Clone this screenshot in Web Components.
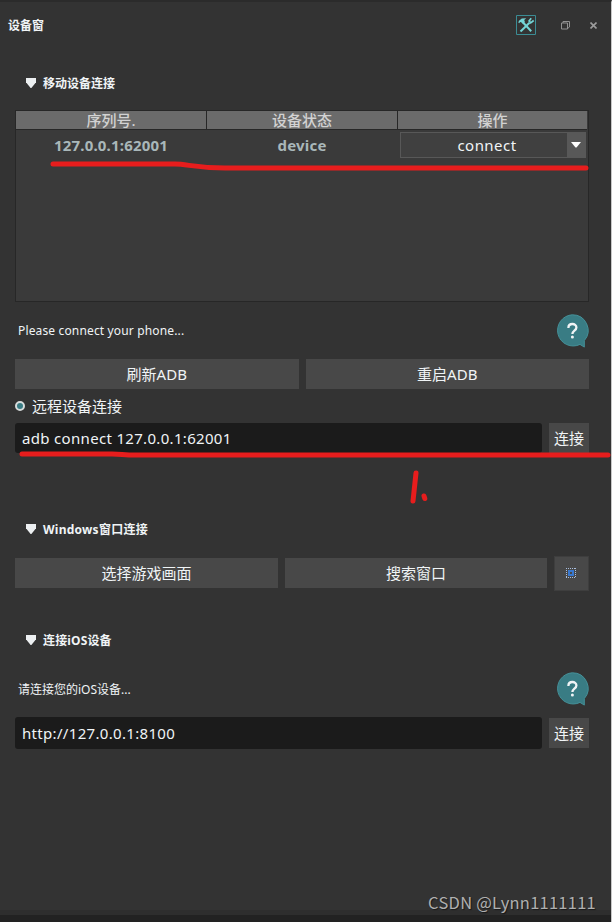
<!DOCTYPE html>
<html lang="zh-CN">
<head>
<meta charset="utf-8">
<title>设备窗</title>
<style>
  body {
    margin: 0;
    background: #333;
  }
</style>
</head>
<body>
<device-window></device-window>

<script>
class PanelButton extends HTMLElement {
  constructor() {
    super();
    this.attachShadow({ mode: "open" });
  }

  static get styles() {
    return /* css */`
      :host {
        display: flex;
        align-items: center;
        justify-content: center;
        box-sizing: border-box;
        height: 30px;
        padding: 0 0 2px 0;
        background: #484848;
        color: #f0f4f6;
        font-size: 15px;
        white-space: nowrap;
      }

      :host([tool]) {
        width: 35px;
        height: 35px;
        padding: 0 1px 1px 0;
        border: 1px solid #3e3e3e;
      }
    `;
  }

  connectedCallback() {
    this.shadowRoot.innerHTML = /* html */`
    <style>${PanelButton.styles}</style>
    <slot></slot>`;
  }
}

class SectionTitle extends HTMLElement {
  constructor() {
    super();
    this.attachShadow({ mode: "open" });
  }

  static get styles() {
    return /* css */`
      :host {
        display: flex;
        align-items: center;
        gap: 7px;
        height: 20px;
        padding-left: 26px;
        color: #f0f4f6;
        font-size: 12px;
        font-weight: 700;
      }

      svg {
        display: block;
      }
    `;
  }

  connectedCallback() {
    this.shadowRoot.innerHTML = /* html */`
    <style>${SectionTitle.styles}</style>
    <svg width="10" height="10"><path d="M0 0h10v4.2L5.4 10h-.8L0 4.2z" fill="#eceff1"/></svg>
    <span><slot></slot></span>`;
  }
}

class HelpBubble extends HTMLElement {
  constructor() {
    super();
    this.attachShadow({ mode: "open" });
  }

  static get styles() {
    return /* css */`
      :host {
        display: block;
        width: 33px;
        height: 34px;
      }

      svg {
        display: block;
      }
    `;
  }

  connectedCallback() {
    this.shadowRoot.innerHTML = /* html */`
    <style>${HelpBubble.styles}</style>
    <svg width="33" height="34" viewBox="0 0 33 34">
      <path d="M16.3.8a15.6 15.6 0 1 0 7.7 29.6l4.3 2.7v-6.5A15.6 15.6 0 0 0 16.3.8z" fill="#397c84" stroke="#459098"/>
      <path d="M12.4 13.9c0-5.2 8-5 8-.5 0 3.2-4 3.3-4 6.6" fill="none" stroke="#f0f4f6" stroke-width="2.3"/>
      <circle cx="16.4" cy="23" r="1.5" fill="#f0f4f6"/>
    </svg>`;
  }
}

class TextField extends HTMLElement {
  constructor() {
    super();
    this.attachShadow({ mode: "open" });
  }

  static get styles() {
    return /* css */`
      :host {
        display: flex;
        align-items: center;
        box-sizing: border-box;
        width: 527px;
        height: 30px;
        padding-left: 7px;
        border-radius: 3px;
        background: #1b1b1b;
        color: #f0f4f6;
        font-size: 15px;
        letter-spacing: 0.32px;
      }
    `;
  }

  connectedCallback() {
    this.shadowRoot.innerHTML = /* html */`
    <style>${TextField.styles}</style>
    <span><slot></slot></span>`;
  }
}

class DeviceTable extends HTMLElement {
  constructor() {
    super();
    this.attachShadow({ mode: "open" });
  }

  static get styles() {
    return /* css */`
      :host {
        display: block;
        box-sizing: border-box;
        width: 574px;
        height: 192px;
        border: 1px solid #272727;
        background: #3a3a3a;
        font-size: 15px;
        font-weight: 700;
      }

      .row {
        display: grid;
        grid-template-columns: 190px 190px 189px;
        column-gap: 1px;
        text-align: center;
      }

      .head {
        width: 571px;
        background: #272727;
        border-bottom: 1px solid #272727;
        color: #d2d2d2;
        font-weight: 500;
        line-height: 18px;
      }

      .head span {
        height: 18px;
        background: #6b6b6b;
      }

      .body {
        color: #a9b7b9;
        letter-spacing: 0.2px;
        line-height: 31px;
      }

      .select {
        display: flex;
        box-sizing: border-box;
        width: 186px;
        height: 26px;
        margin: 2px 0 0 2px;
        border: 1px solid #585858;
        background: #404040;
        color: #f0f4f6;
        font-weight: 400;
        letter-spacing: 0.45px;
        line-height: 25px;
      }

      .select span {
        flex: 1;
        padding-left: 6px;
      }

      .arrow {
        display: flex;
        justify-content: center;
        width: 18px;
        padding: 9px 1px 0 0;
        box-sizing: border-box;
        background: #585858;
      }
    `;
  }

  connectedCallback() {
    this.shadowRoot.innerHTML = /* html */`
    <style>${DeviceTable.styles}</style>
    <div class="row head"><span>序列号.</span><span>设备状态</span><span>操作</span></div>
    <div class="row body">
      <span>127.0.0.1:62001</span>
      <span>device</span>
      <div class="select">
        <span>connect</span>
        <div class="arrow"><svg width="10" height="6"><path d="M0 0h10L5.5 5.5h-1z" fill="#fff"/></svg></div>
      </div>
    </div>`;
  }
}

class DeviceWindow extends HTMLElement {
  constructor() {
    super();
    this.attachShadow({ mode: "open" });
  }

  static get styles() {
    return /* css */`
      :host {
        display: flex;
        flex-direction: column;
        position: relative;
        box-sizing: border-box;
        width: 612px;
        height: 922px;
        overflow: hidden;
        padding-left: 15px;
        border-top: 2px solid #2b2b2b;
        border-right: 1px solid #c8c8c8;
        background: #333;
        color: #f0f4f6;
        font-family: "Noto Sans", "Noto Sans CJK SC", sans-serif;
      }

      .titlebar {
        display: flex;
        align-items: center;
        height: 46px;
        margin-left: -7px;
        font-size: 12px;
        font-weight: 700;
      }

      .titlebar span {
        flex: 1;
      }

      .titlebar svg {
        display: block;
      }

      .line {
        display: flex;
        width: 574px;
        gap: 7px;
      }

      .hint {
        align-items: center;
        justify-content: space-between;
        box-sizing: border-box;
        height: 34px;
        padding-left: 3px;
        font-size: 12px;
      }

      .hint span {
        padding-bottom: 1px;
      }

      .radio {
        align-items: center;
        height: 34px;
        font-size: 15px;
      }

      .radio span {
        padding-bottom: 1px;
      }

      .dot {
        box-sizing: border-box;
        width: 10px;
        height: 10px;
        border: 2px solid #d8dcdc;
        border-radius: 50%;
        background: #397c84;
      }

      .half {
        flex: 1;
      }

      .go {
        width: 40px;
      }

      .foot {
        height: 12px;
        margin: auto 0 0 -15px;
        background: linear-gradient(#2e2e2e 5px, #222 5px);
      }

      .watermark {
        position: absolute;
        right: 15px;
        bottom: 9px;
        color: #b0b0b0;
        font: 400 16.5px/22px "Noto Sans CJK SC", sans-serif;
        letter-spacing: 0.25px;
        white-space: nowrap;
        text-shadow: 1px 1px 1px #0008;
      }

      .pen {
        position: absolute;
        left: 0;
        top: -2px;
        fill: none;
        stroke: #e71d1d;
        stroke-width: 5;
        stroke-linecap: round;
        stroke-linejoin: round;
      }
    `;
  }

  connectedCallback() {
    this.shadowRoot.innerHTML = /* html */`
    <style>${DeviceWindow.styles}</style>
    <div class="titlebar">
      <span>设备窗</span>
      <svg width="20" height="20" viewBox="0 0 20 20" style="margin-right: 25px">
        <path d="M.5.5h19v19H.5z" fill="none" stroke="#3b8c94"/>
        <path d="M2.3 7.6 3 5.8 5.8 3.4l4.4-.2-2 1.9.7 2-2 2-2-2.2-1 .3-.6 1z" fill="#74d4d6"/>
        <path d="m7.3 7.7 7.9 8.6" stroke="#74d4d6" stroke-width="2"/>
        <path d="m4.5 16.5 9-8.8" stroke="#74d4d6" stroke-width="2"/>
        <path d="m15.2 3.2-2.1 2.7 1.6 1.9 3-2.3" fill="none" stroke="#74d4d6" stroke-width="1.7"/>
      </svg>
      <svg width="9" height="9" viewBox="0 0 9 9" style="margin-right: 20px">
        <path d="M.5 2h6v6h-6zM2 2V.5h6.5V6L6.5 7.5" fill="none" stroke="#929292"/>
      </svg>
      <svg width="7" height="7" viewBox="0 0 7 7" style="margin-right: 14px">
        <path d="m.5.5 6 6m0-6-6 6" stroke="#9c9c9c" stroke-width="1.6"/>
      </svg>
    </div>

    <section-title style="margin: 25px 0 17px -15px">移动设备连接</section-title>
    <device-table></device-table>
    <div class="line hint" style="margin: 12px 0 11px"><span style="letter-spacing: .15px">Please connect your phone...</span><help-bubble></help-bubble></div>
    <div class="line">
      <panel-button class="half">刷新ADB</panel-button>
      <panel-button class="half">重启ADB</panel-button>
    </div>
    <div class="line radio"><i class="dot"></i><span>远程设备连接</span></div>
    <div class="line">
      <text-field>adb connect 127.0.0.1:62001</text-field>
      <panel-button class="go">连接</panel-button>
    </div>

    <section-title style="margin: 66px 0 17px -15px; letter-spacing: .25px">Windows窗口连接</section-title>
    <div class="line" style="align-items: flex-start">
      <panel-button style="width: 263px; margin-top: 2px; padding-bottom: 1px">选择游戏画面</panel-button>
      <panel-button style="width: 262px; margin-top: 2px; padding-bottom: 1px">搜索窗口</panel-button>
      <panel-button tool>
        <svg width="10" height="10" viewBox="0 0 10 10">
          <path d="M0 .5h10M0 9.5h10M.5 0v10M9.5 0v10" stroke="#a9bfe0" stroke-dasharray="1 1"/>
          <path d="M3 3h4v4H3z" fill="#484848" stroke="#3878d0" stroke-width="2"/>
        </svg>
      </panel-button>
    </div>

    <section-title style="margin: 39px 0 22px -15px; letter-spacing: .15px">连接iOS设备</section-title>
    <div class="line hint" style="margin-bottom: 11px"><span>请连接您的iOS设备...</span><help-bubble></help-bubble></div>
    <div class="line" style="align-items: center">
      <text-field style="height: 32px">http://127.0.0.1:8100</text-field>
      <panel-button class="go">连接</panel-button>
    </div>

    <div class="foot"></div>
    <div class="watermark">CSDN @Lynn1111111</div>
    <svg class="pen" width="612" height="922">
      <path d="M53 164H175C187 164 196 168 225 168H586"/>
      <path d="M22 454H112C120 454 125 455 135 455H608"/>
      <path d="M416 473 413 501M424 496l.8 2.5"/>
    </svg>`;
  }
}

customElements.define("panel-button", PanelButton);
customElements.define("section-title", SectionTitle);
customElements.define("help-bubble", HelpBubble);
customElements.define("text-field", TextField);
customElements.define("device-table", DeviceTable);
customElements.define("device-window", DeviceWindow);
</script>
</body>
</html>
